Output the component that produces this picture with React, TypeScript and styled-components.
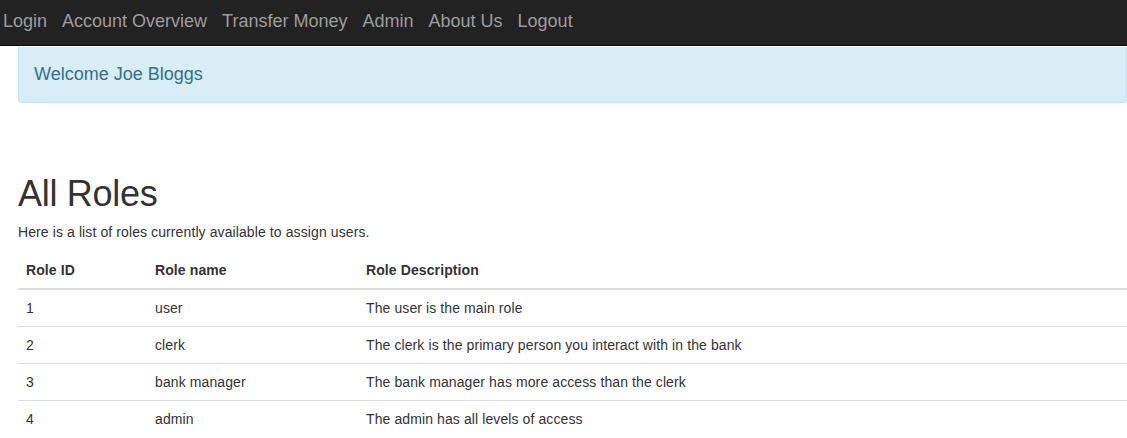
import React from "react";
import styled, { createGlobalStyle } from "styled-components";

const Global = createGlobalStyle`
  html, body { margin: 0; padding: 0; background: #fff; }
  body {
    font-family: "Liberation Sans", Arial, Helvetica, sans-serif;
    font-size: 14px;
    color: #333;
    overflow: hidden;
  }
`;

const NavBar = styled.nav`
  height: 45px;
  background: #222;
  border-bottom: 1px solid #080808;
  display: flex;
  align-items: center;
  padding-left: 3px;
  gap: 15px;
`;

const NavLink = styled.a`
  color: #9d9d9d;
  font-size: 18px;
  text-decoration: none;
  line-height: 1;
  margin-top: -4px;
`;

const Main = styled.main`
  padding-left: 18px;
`;

const Alert = styled.div`
  background: #d9edf7;
  border: 1px solid #bce8f1;
  border-top: none;
  border-radius: 0 0 4px 4px;
  color: #31708f;
  font-size: 18px;
  height: 55px;
  display: flex;
  align-items: center;
  padding-left: 15px;
  margin-top: 1px;
`;

const Heading = styled.h1`
  font-size: 36px;
  font-weight: 500;
  line-height: 1.1;
  margin: 71px 0 8px;
  color: #333;
  letter-spacing: -0.3px;
`;

const Intro = styled.p`
  margin: 0 0 10px;
  font-size: 14px;
  line-height: 20px;
  letter-spacing: 0.1px;
`;

const Table = styled.table`
  width: 100%;
  border-collapse: collapse;
  table-layout: fixed;
  font-size: 14px;
  letter-spacing: 0.1px;
`;

const Th = styled.th<{ $w?: number }>`
  text-align: left;
  font-weight: bold;
  padding: 8px;
  line-height: 20px;
  border-bottom: 2px solid #ddd;
  width: ${(p) => (p.$w ? `${p.$w}px` : "auto")};
`;

const Td = styled.td`
  padding: 8px;
  line-height: 20px;
  border-top: 1px solid #ddd;
`;

const roles = [
  ["1", "user", "The user is the main role"],
  ["2", "clerk", "The clerk is the primary person you interact with in the bank"],
  ["3", "bank manager", "The bank manager has more access than the clerk"],
  ["4", "admin", "The admin has all levels of access"],
];

export default function App() {
  return (
    <>
      <Global />
      <NavBar>
        {["Login", "Account Overview", "Transfer Money", "Admin", "About Us", "Logout"].map((l) => (
          <NavLink key={l} href="#">
            {l}
          </NavLink>
        ))}
      </NavBar>
      <Main>
        <Alert>Welcome Joe Bloggs</Alert>
        <Heading>All Roles</Heading>
        <Intro>Here is a list of roles currently available to assign users.</Intro>
        <Table>
          <thead>
            <tr>
              <Th $w={113}>Role ID</Th>
              <Th $w={195}>Role name</Th>
              <Th>Role Description</Th>
            </tr>
          </thead>
          <tbody>
            {roles.map((r) => (
              <tr key={r[0]}>
                <Td>{r[0]}</Td>
                <Td>{r[1]}</Td>
                <Td>{r[2]}</Td>
              </tr>
            ))}
          </tbody>
        </Table>
      </Main>
    </>
  );
}
